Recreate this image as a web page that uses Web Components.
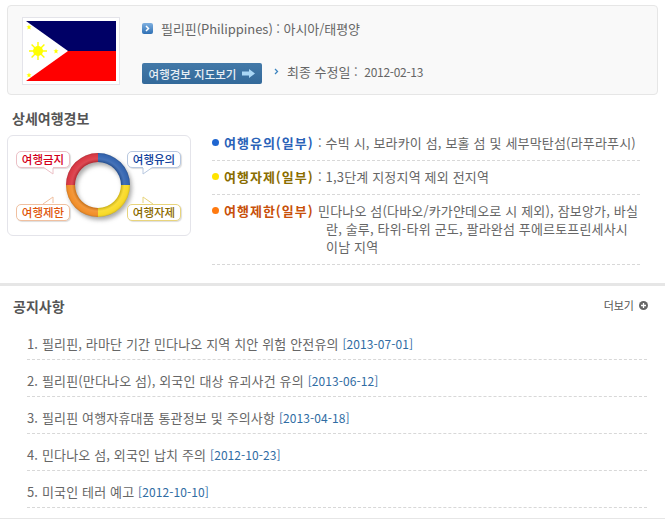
<!DOCTYPE html>
<html lang="ko">
<head>
<meta charset="utf-8">
<title>필리핀</title>
<style>
  html, body { margin: 0; padding: 0; background: #fff; }
  body { width: 665px; height: 527px; overflow: hidden; font: 13px "Noto Sans CJK KR", "Liberation Sans", sans-serif; color: #666; }
</style>
</head>
<body>
<country-head></country-head>
<section-title style="margin: 14px 0 7px 12px">상세여행경보</section-title>
<alert-section>
  <alert-row color="#1f66d0" text-color="#2a62b8" label="여행유의(일부)">: 수빅 시, 보라카이 섬, 보홀 섬 및 세부막탄섬(라푸라푸시)</alert-row>
  <alert-row color="#ffe400" text-color="#8a6d00" label="여행자제(일부)">: 1,3단계 지정지역 제외 전지역</alert-row>
  <alert-row color="#ff7a10" text-color="#c8500a" label="여행제한(일부)">민다나오 섬(다바오/카가얀데오로 시 제외), 잠보앙가, 바실란, 술루, 타위-타위 군도, 팔라완섬 푸에르토프린세사시 이남 지역</alert-row>
</alert-section>
<notice-board>
  <notice-item date="2013-07-01">1. 필리핀, 라마단 기간 민다나오 지역 치안 위험 안전유의</notice-item>
  <notice-item date="2013-06-12">2. 필리핀(만다나오 섬), 외국인 대상 유괴사건 유의</notice-item>
  <notice-item date="2013-04-18">3. 필리핀 여행자휴대품 통관정보 및 주의사항</notice-item>
  <notice-item date="2012-10-23">4. 민다나오 섬, 외국인 납치 주의</notice-item>
  <notice-item date="2012-10-10">5. 미국인 테러 예고</notice-item>
</notice-board>

<script>
class CountryHead extends HTMLElement {
  constructor() {
    super();
    this.attachShadow({ mode: "open" });
  }

  connectedCallback() {
    this.shadowRoot.innerHTML = /* html */`
    <style>
      :host {
        display: flex;
        box-sizing: border-box;
        width: 651px;
        height: 90px;
        margin: 5px 0 0 7px;
        padding: 11px 14px 9px;
        gap: 22px;
        background: #f9f9f9;
        border: 1px solid #e6e6e6;
        border-radius: 4px;
      }
      .flag { display: block; width: 90px; height: 60px; padding: 3px; border: 1px solid #e4e4ea; background: #fff; }
      .main { display: flex; flex-direction: column; justify-content: space-between; padding: 4px 0 0; height: 67px; box-sizing: border-box; }
      .name { display: flex; align-items: center; gap: 8px; height: 14px; letter-spacing: -.05px; }
      .go { width: 11px; height: 11px; }
      .foot { display: flex; align-items: center; gap: 12px; }
      .map {
        display: flex; align-items: center; justify-content: center; gap: 6px;
        width: 120px; height: 21px; border-radius: 2px;
        background: linear-gradient(#4379a8, #33699a);
        color: #e8eef4; font-size: 11.5px; font-weight: 500;
      }
      .date { display: flex; align-items: center; gap: 8px; position: relative; top: -2px; }
      .num { font-size: 12px; margin-left: 3px; letter-spacing: -.3px; }
    </style>
    <svg class="flag" viewBox="0 0 90 60">
      <rect width="90" height="30" fill="#000066"/>
      <rect y="30" width="90" height="30" fill="#ff0000"/>
      <path d="M0 0L42 30L0 60Z" fill="#fff"/>
      <path d="M12 21V39M3 30H21M5.600 23.600L18.400 36.400M18.400 23.600L5.600 36.400" stroke="#ffff00" stroke-width="1.400"/>
      <circle cx="12" cy="30" r="5" fill="#ffff00"/>
      <path d="M3 3.500l.7 1.800 1.900.1-1.500 1.200.5 1.900L3 7.500 1.400 8.500l.5-1.900L.4 5.400l1.900-.1z" fill="#ffff00"/>
      <path d="M3 51.500l.7 1.800 1.900.1-1.500 1.200.5 1.900L3 55.500 1.400 56.500l.5-1.900L.4 53.400l1.900-.1z" fill="#ffff00"/>
      <path d="M30 27.500l.7 1.800 1.900.1-1.500 1.200.5 1.900L30 31.500l-1.600 1 .5-1.900-1.500-1.200 1.900-.1z" fill="#ffff00"/>
    </svg>
    <div class="main">
      <div class="name">
        <svg class="go" viewBox="0 0 11 11">
          <defs><linearGradient id="g" x1="0" y1="0" x2="0" y2="1"><stop offset="0" stop-color="#7fb0e0"/><stop offset="1" stop-color="#2f70b4"/></linearGradient></defs>
          <rect width="11" height="11" rx="2" fill="url(#g)"/>
          <path d="M4 3l2.500 2.500L4 8" fill="none" stroke="#fff" stroke-width="1.500"/>
        </svg>
        <span>필리핀(Philippines) : 아시아/태평양</span>
      </div>
      <div class="foot">
        <div class="map">여행경보 지도보기
          <svg width="13" height="9" viewBox="0 0 13 9"><path d="M0 2.500H7V0L13 4.500L7 9V6.500H0Z" fill="#a9d6f5"/></svg>
        </div>
        <div class="date">
          <svg width="5" height="7" viewBox="0 0 5 7"><path d="M1 1l2.500 2.500L1 6" fill="none" stroke="#3d85c0" stroke-width="1.300"/></svg>
          <span>최종 수정일 : <span class="num">2012-02-13</span></span>
        </div>
      </div>
    </div>`;
  }
}

class SectionTitle extends HTMLElement {
  constructor() {
    super();
    this.attachShadow({ mode: "open" });
    this.shadowRoot.innerHTML = /* html */`
    <style>
      :host { display: block; height: 19px; line-height: 19px; font-size: 14px; font-weight: 700; color: #555; }
    </style>
    <slot></slot>`;
  }
}

class AlertLegend extends HTMLElement {
  constructor() {
    super();
    this.attachShadow({ mode: "open" });
    this.shadowRoot.innerHTML = /* html */`
    <style>
      :host {
        display: block; position: relative; box-sizing: border-box; flex: none;
        width: 184px; height: 101px;
        background: #fff; border: 1px solid #e4e4ea; border-radius: 6px;
      }
      svg { position: absolute; left: 0; top: 0; }
      .tip {
        position: absolute; box-sizing: border-box; width: 54px; height: 17px;
        line-height: 15px; text-align: center; font-size: 11.5px; font-weight: 500;
        background: #fff; border: 1px solid; border-radius: 5px;
        box-shadow: 1px 1px 1px #ddd;
      }
    </style>
    <svg width="182" height="99" viewBox="0 0 182 99">
      <defs>
        <filter id="s" x="-20%" y="-20%" width="150%" height="150%"><feGaussianBlur stdDeviation="2"/></filter>
        <radialGradient id="bevel" gradientUnits="userSpaceOnUse" cx="90" cy="49" r="32">
          <stop offset=".72" stop-color="#000" stop-opacity=".18"/>
          <stop offset=".82" stop-color="#fff" stop-opacity=".12"/>
          <stop offset=".92" stop-color="#fff" stop-opacity=".05"/>
          <stop offset="1" stop-color="#000" stop-opacity=".15"/>
        </radialGradient>
      </defs>
      <circle cx="92" cy="52" r="27.500" fill="none" stroke="#aaa" stroke-width="9" filter="url(#s)"/>
      <path d="M90 17A32 32 0 0 1 122 49H113A23 23 0 0 0 90 26Z" fill="#2c5fae"/>
      <path d="M122 49A32 32 0 0 1 90 81V72A23 23 0 0 0 113 49Z" fill="#f9d91e"/>
      <path d="M90 81A32 32 0 0 1 58 49H67A23 23 0 0 0 90 72Z" fill="#f28a20"/>
      <path d="M58 49A32 32 0 0 1 90 17V26A23 23 0 0 0 67 49Z" fill="#d9303c"/>
      <circle cx="90" cy="49" r="27.500" fill="none" stroke="url(#bevel)" stroke-width="9"/>
    </svg>
    <div class="tip" style="left:8px;top:15px;color:#d4001a;border-color:#ecc0c6">여행금지</div>
    <div class="tip" style="left:119px;top:15px;color:#13439c;border-color:#b8c8e0">여행유의</div>
    <div class="tip" style="left:8px;top:68px;color:#e0560a;border-color:#f0c0a0">여행제한</div>
    <div class="tip" style="left:119px;top:68px;color:#8a6a00;border-color:#e8d47c">여행자제</div>
    <svg width="182" height="99" viewBox="0 0 182 99">
      <path d="M35 31L45 38V31Z" fill="#fff"/><path d="M35 31L45 38V32" fill="none" stroke="#ecc0c6"/>
      <path d="M135 31V38L145 31Z" fill="#fff"/><path d="M135 32V38L145 31" fill="none" stroke="#b8c8e0"/>
      <path d="M35 68L45 61V68Z" fill="#fff"/><path d="M35 68L45 61V67" fill="none" stroke="#f0c0a0"/>
      <path d="M135 68V61L145 68Z" fill="#fff"/><path d="M135 67V61L145 68" fill="none" stroke="#e8d47c"/>
    </svg>`;
  }
}

class AlertSection extends HTMLElement {
  constructor() {
    super();
    this.attachShadow({ mode: "open" });
    this.shadowRoot.innerHTML = /* html */`
    <style>
      :host { display: flex; gap: 21px; margin-left: 7px; height: 148px; }
      .rows { width: 428px; margin-top: -1px; }
    </style>
    <alert-legend></alert-legend>
    <div class="rows"><slot></slot></div>`;
  }
}

class AlertRow extends HTMLElement {
  constructor() {
    super();
    this.attachShadow({ mode: "open" });
  }

  connectedCallback() {
    const color = this.getAttribute("color");
    const textColor = this.getAttribute("text-color");
    this.shadowRoot.innerHTML = /* html */`
    <style>
      :host {
        display: block; box-sizing: border-box; padding-bottom: 8px; margin-bottom: 7px;
        line-height: 18px; border-bottom: 1px dashed #d8d8d8;
      }
      .in { display: flex; }
      .dot { flex: none; width: 7px; height: 7px; margin: 5px 5px 0 0; border-radius: 50%; background: ${color}; }
      b { flex: none; width: 94px; color: ${textColor}; font-size: 13px; letter-spacing: 1px; white-space: nowrap; }
      .txt { flex: 1; padding-left: 8px; text-indent: -8px; letter-spacing: .17px; word-break: break-all; }
    </style>
    <div class="in">
      <span class="dot"></span>
      <b>${this.getAttribute("label")}</b>
      <span class="txt"><slot></slot></span>
    </div>`;
  }
}

class NoticeBoard extends HTMLElement {
  constructor() {
    super();
    this.attachShadow({ mode: "open" });
    this.shadowRoot.innerHTML = /* html */`
    <style>
      :host { display: block; border-top: 3px solid #e6e6e6; border-bottom: 1px solid #e6e6e6; height: 232px; }
      .top { display: flex; justify-content: space-between; box-sizing: border-box; padding: 11px 17px 0 13px; height: 37px; }
      .more { display: flex; align-items: center; gap: 5px; height: 16px; font-size: 11px; color: #555; }
      ul { margin: 0 0 0 27px; padding: 0; width: 620px; }
    </style>
    <div class="top">
      <section-title>공지사항</section-title>
      <div class="more">더보기
        <svg width="9" height="9" viewBox="0 0 9 9"><circle cx="4.500" cy="4.500" r="4.500" fill="#666"/><path d="M4.500 2V7M2 4.500H7" stroke="#fff" stroke-width="1.300"/></svg>
      </div>
    </div>
    <ul><slot></slot></ul>`;
  }
}

class NoticeItem extends HTMLElement {
  constructor() {
    super();
    this.attachShadow({ mode: "open" });
  }

  connectedCallback() {
    this.shadowRoot.innerHTML = /* html */`
    <style>
      :host { display: block; height: 37px; box-sizing: border-box; padding-top: 12px; line-height: 18px; letter-spacing: .15px; border-bottom: 1px dashed #d8d8d8; }
      .date { color: #2f6ca3; font-size: 12px; letter-spacing: .08px; }
    </style>
    <slot></slot> <span class="date">[${this.getAttribute("date")}]</span>`;
  }
}

customElements.define("country-head", CountryHead);
customElements.define("section-title", SectionTitle);
customElements.define("alert-legend", AlertLegend);
customElements.define("alert-section", AlertSection);
customElements.define("alert-row", AlertRow);
customElements.define("notice-board", NoticeBoard);
customElements.define("notice-item", NoticeItem);
</script>
</body>
</html>
